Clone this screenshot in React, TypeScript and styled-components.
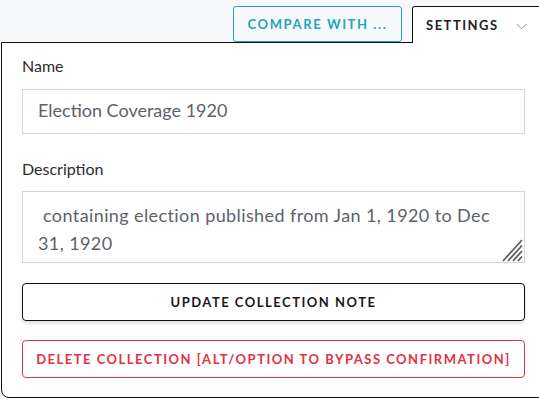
import React from "react";
import styled, { createGlobalStyle } from "styled-components";

const Global = createGlobalStyle`
  html, body { margin: 0; padding: 0; background: #ffffff; overflow: hidden; }
  body { font-family: Lato, "Noto Sans", sans-serif; width: 539px; height: 400px; }
  * { box-sizing: border-box; }
`;

const Page = styled.div`
  width: 546px;
  display: flex;
  flex-direction: column;
`;

const Header = styled.div`
  height: 42px;
  background: #f7f8fa;
  display: flex;
  align-items: flex-end;
  justify-content: flex-end;
  gap: 10px;
`;

const CompareButton = styled.button`
  width: 169px;
  height: 36px;
  border: 1px solid #1ea5c1;
  border-radius: 3px;
  background: #f7f8fa;
  color: #1ea5c1;
  font-family: Lato, "Noto Sans", sans-serif;
  font-size: 13px;
  font-weight: 700;
  letter-spacing: 1.6px;
  padding: 0;
`;

const SettingsTab = styled.div`
  position: relative;
  z-index: 1;
  width: 134px;
  height: 37px;
  margin-bottom: -1px;
  background: #ffffff;
  border: 1px solid #111;
  border-bottom: none;
  border-radius: 3px 3px 0 0;
  display: flex;
  align-items: center;
  padding: 0 0 1px 13px;
  color: #222;
  font-size: 13px;
  font-weight: 700;
  letter-spacing: 1.5px;
`;

const Chevron = styled.svg`
  margin-left: 17px;
  width: 11px;
  height: 7px;
  margin-top: 3px;
`;

const Panel = styled.div`
  margin-left: 1px;
  width: 545px;
  height: 356px;
  border: 1px solid #111;
  border-radius: 0 0 8px 8px;
  padding: 13px 20px 0 20px;
  background: #fff;
  display: flex;
  flex-direction: column;
`;

const Label = styled.label<{ $gap: number }>`
  font-size: 16px;
  line-height: 20px;
  color: #2b2b2b;
  margin-bottom: ${(p) => p.$gap}px;
`;

const TextInput = styled.input`
  width: 503px;
  height: 45px;
  border: 1px solid #d3d7dc;
  border-radius: 0;
  padding: 0 0 2px 15px;
  font-family: Lato, "Noto Sans", sans-serif;
  font-size: 18px;
  color: #5d6268;
  outline: none;
  margin-bottom: 25px;
`;

const AreaWrap = styled.div`
  position: relative;
  width: 503px;
  height: 73px;
  margin-bottom: 20px;
`;

const TextArea = styled.textarea`
  width: 100%;
  height: 100%;
  display: block;
  border: 1px solid #d3d7dc;
  border-radius: 0;
  padding: 9px 24px 0 15px;
  font-family: Lato, "Noto Sans", sans-serif;
  font-size: 18px;
  line-height: 28px;
  letter-spacing: 0.4px;
  color: #5d6268;
  resize: none;
  outline: none;
`;

const Grip = styled.svg`
  position: absolute;
  right: 2px;
  bottom: 1px;
  width: 21px;
  height: 23px;
  pointer-events: none;
`;

const ActionButton = styled.button<{ $danger?: boolean }>`
  width: 503px;
  height: 38px;
  border: 1px solid ${(p) => (p.$danger ? "#e03246" : "#111")};
  border-radius: 4px;
  background: #fff;
  color: ${(p) => (p.$danger ? "#e03246" : "#1a1a1a")};
  font-family: Lato, "Noto Sans", sans-serif;
  font-size: 13px;
  font-weight: 700;
  letter-spacing: 1.5px;
  box-shadow: ${(p) => (p.$danger ? "none" : "0 2px 4px rgba(0,0,0,0.15)")};
  margin-bottom: 19px;
  padding: 0;
`;

export default function App() {
  return (
    <>
      <Global />
      <Page>
        <Header>
          <CompareButton>COMPARE WITH ...</CompareButton>
          <SettingsTab>
            SETTINGS
            <Chevron viewBox="0 0 11 7">
              <path d="M0.5 0.8 L5.5 5.8 L10.5 0.8" fill="none" stroke="#8a8f96" strokeWidth="1" />
            </Chevron>
          </SettingsTab>
        </Header>
        <Panel>
          <Label $gap={13}>Name</Label>
          <TextInput defaultValue="Election Coverage 1920" />
          <Label $gap={12}>Description</Label>
          <AreaWrap>
            <TextArea defaultValue=" containing election published from Jan 1, 1920 to Dec 31, 1920" />
            <Grip viewBox="0 0 21 23">
              <g stroke="#5a5a5a" strokeWidth="1.7" strokeLinecap="butt">
                <line x1="1" y1="22" x2="20" y2="1" />
                <line x1="6" y1="22" x2="20" y2="6.5" />
                <line x1="11" y1="22" x2="20" y2="12" />
                <line x1="16" y1="22" x2="20" y2="17.5" />
              </g>
            </Grip>
          </AreaWrap>
          <ActionButton>UPDATE COLLECTION NOTE</ActionButton>
          <ActionButton $danger>DELETE COLLECTION [ALT/OPTION TO BYPASS CONFIRMATION]</ActionButton>
        </Panel>
      </Page>
    </>
  );
}
